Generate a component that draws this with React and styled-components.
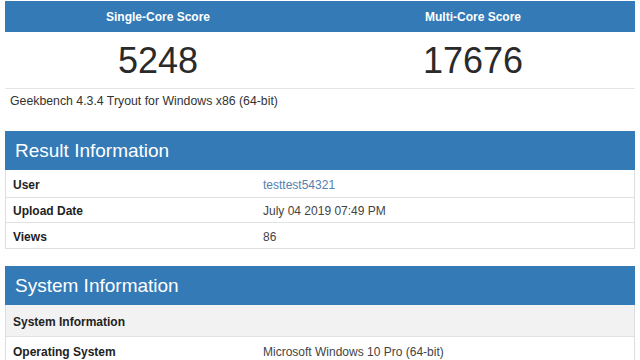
import styled, { createGlobalStyle } from 'styled-components';

const GlobalStyle = createGlobalStyle`
  body {
    margin: 0;
    background: #fff;
    font-family: 'Liberation Sans', Arial, sans-serif;
    color: #333;
  }
`;

const Page = styled.div`
  width: 640px;
  height: 360px;
  overflow: hidden;
  padding: 1px 5px 0;
  box-sizing: border-box;
`;

const ScoreTable = styled.div`
  display: grid;
  grid-template-columns: 306px 1fr;
  border-bottom: 1px solid #e4e4e4;
`;

const ScoreHead = styled.div`
  height: 31px;
  background: #337ab7;
  color: #fff;
  font-size: 12px;
  font-weight: 700;
  display: flex;
  align-items: center;
  justify-content: center;
`;

const ScoreValue = styled.div`
  height: 56px;
  display: flex;
  align-items: center;
  justify-content: center;
  font-size: 36px;
  color: #2a2a2a;
  padding-top: 1px;
  box-sizing: border-box;
`;

const Version = styled.div`
  font-size: 12.3px;
  padding: 5px 5px;
  height: 23px;
  box-sizing: border-box;
  color: #333;
`;

const Panel = styled.section`
  margin-top: ${p => p.$top}px;
  border: 1px solid #dedede;
  border-top: none;
`;

const PanelHead = styled.h2`
  margin: 0 -1px;
  height: 39px;
  background: #337ab7;
  color: #fff;
  font-size: 19px;
  font-weight: 400;
  display: flex;
  align-items: center;
  padding: 0 10px;
`;

const Row = styled.div`
  display: grid;
  grid-template-columns: 257px 1fr;
  height: ${p => p.$h || 25}px;
  padding-top: 2px;
  box-sizing: border-box;
  align-items: center;
  font-size: 12px;
  background: ${p => (p.$sub ? '#f2f2f2' : '#fff')};
  & + & {
    border-top: 1px solid #e2e2e2;
  }
`;

const Label = styled.div`
  font-weight: 700;
  padding-left: 7px;
  color: #222;
`;

const Value = styled.div`
  color: #444;
`;

const Link = styled.a`
  color: #5580ad;
  text-decoration: none;
`;

export default function App() {
  return (
    <Page>
      <GlobalStyle />
      <ScoreTable>
        <ScoreHead>Single-Core Score</ScoreHead>
        <ScoreHead>Multi-Core Score</ScoreHead>
        <ScoreValue>5248</ScoreValue>
        <ScoreValue>17676</ScoreValue>
      </ScoreTable>
      <Version>Geekbench 4.3.4 Tryout for Windows x86 (64-bit)</Version>

      <Panel $top={19}>
        <PanelHead>Result Information</PanelHead>
        <Row $h={27}>
          <Label>User</Label>
          <Value>
            <Link href="#">testtest54321</Link>
          </Value>
        </Row>
        <Row>
          <Label>Upload Date</Label>
          <Value>July 04 2019 07:49 PM</Value>
        </Row>
        <Row $h={26}>
          <Label>Views</Label>
          <Value>86</Value>
        </Row>
      </Panel>

      <Panel $top={17}>
        <PanelHead>System Information</PanelHead>
        <Row $sub $h={31}>
          <Label>System Information</Label>
          <Value />
        </Row>
        <Row $h={28}>
          <Label>Operating System</Label>
          <Value>Microsoft Windows 10 Pro (64-bit)</Value>
        </Row>
      </Panel>
    </Page>
  );
}
